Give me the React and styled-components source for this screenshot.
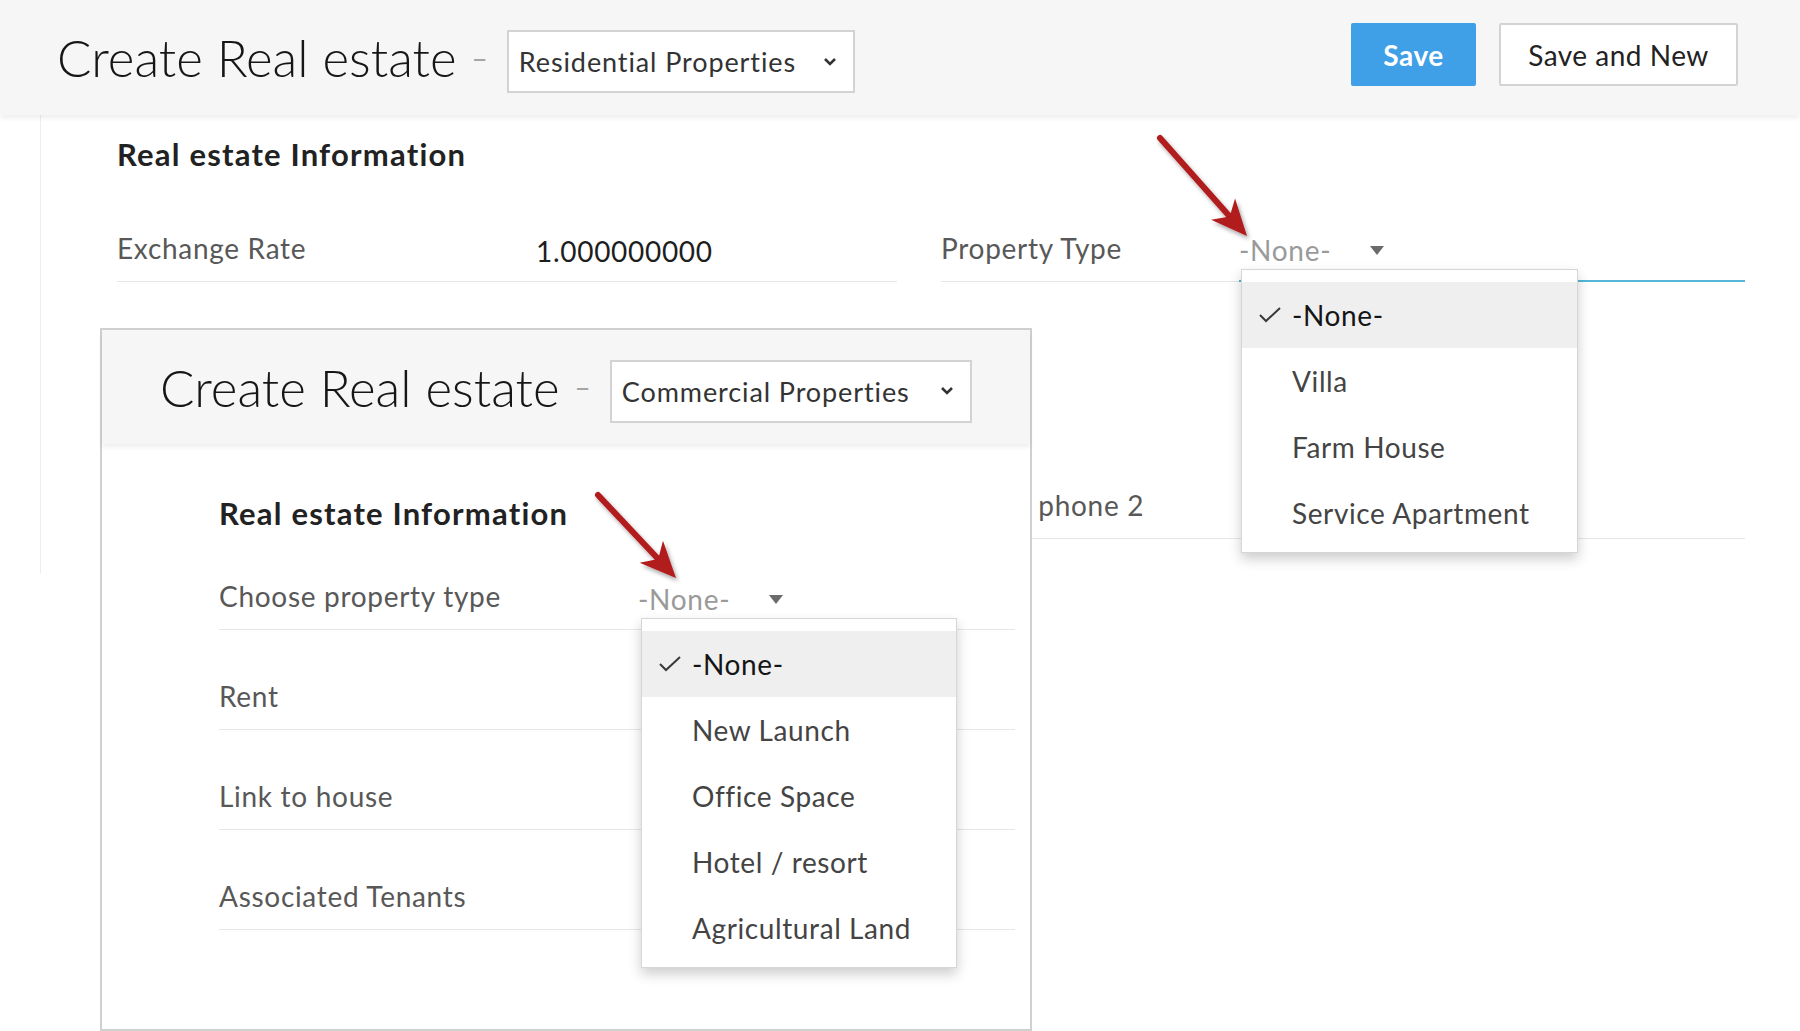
import React from 'react';
import styled, { createGlobalStyle, css } from 'styled-components';

const GlobalStyle = createGlobalStyle`
  html, body {
    margin: 0;
    padding: 0;
    background: #fff;
  }
  body {
    font-family: Lato, "Open Sans", "Liberation Sans", sans-serif;
    color: #333;
  }
`;

const Page = styled.div`
  position: relative;
  width: 1800px;
  height: 1031px;
  overflow: hidden;
  background: #fff;
`;

// header bar with title, layout picker and the buttons
const TopBar = styled.header`
  position: relative;
  z-index: 1;
  display: flex;
  align-items: center;
  box-sizing: border-box;
  height: ${p => p.$h}px;
  padding: 0 ${p => p.$right}px 0 ${p => p.$left}px;
  background: #f6f6f6;
  box-shadow: 0 3px 5px rgba(0, 0, 0, 0.07);
`;

const Title = styled.h1`
  margin: 0;
  font-size: 51px;
  font-weight: 300;
  color: #161616;
  white-space: nowrap;
`;

const Dash = styled.span`
  margin: 0 19px 0 15px;
  font-size: 28px;
  color: #a5a5a5;
`;

const LayoutSelect = styled.div`
  display: flex;
  flex-shrink: 0;
  align-items: center;
  justify-content: space-between;
  box-sizing: border-box;
  width: ${p => p.$w}px;
  height: 63px;
  margin-top: 8px;
  padding: 0 16px 0 10px;
  border: 2px solid #d3d3d3;
  background: #fff;
  font-size: 27px;
  letter-spacing: 0.9px;
  color: #333;
  white-space: nowrap;
`;

const Actions = styled.div`
  display: flex;
  gap: 23px;
  margin-left: auto;
  margin-bottom: 6px;
`;

const Button = styled.button`
  box-sizing: border-box;
  width: ${p => p.$w}px;
  height: 63px;
  border-radius: 2px;
  font-family: inherit;
  font-size: 28px;
  letter-spacing: 0.5px;
  cursor: pointer;
  ${p => p.$primary ? css`
    border: none;
    background: #3fa0e8;
    color: #fff;
    font-weight: 700;
  ` : css`
    border: 2px solid #d3d3d3;
    background: #fff;
    color: #222;
  `}
`;

const Body = styled.div`
  box-sizing: border-box;
  height: 459px;
  margin-left: 40px;
  padding: 19px 55px 0 76px;
  border-left: 1px solid #eeeeee;
`;

const SectionTitle = styled.h2`
  margin: 0;
  font-size: 31px;
  font-weight: 700;
  letter-spacing: 1.2px;
  line-height: ${p => p.$lh}px;
  color: #222;
`;

const FieldGrid = styled.div`
  display: grid;
  grid-template-columns: 780px 804px;
  column-gap: 44px;
  row-gap: 189px;
  margin-top: 40px;
`;

const FieldRow = styled.div`
  display: grid;
  grid-template-columns: ${p => p.$labelW}px 1fr;
  height: ${p => p.$h}px;
`;

const Cell = styled.div`
  position: relative;
  display: flex;
  align-items: flex-end;
  box-sizing: border-box;
  padding-bottom: 16px;
  line-height: 34px;
  font-size: 28px;
  letter-spacing: 0.7px;
  white-space: nowrap;
  border-bottom: ${p => p.$focus ? '2px solid #56b6da' : '1px solid #e7e7e7'};
`;

const Label = styled(Cell)`
  color: #585858;
`;

const Value = styled(Cell)`
  padding-bottom: 13px;
  color: #1e1e1e;
`;

const Picker = styled.div`
  display: flex;
  align-items: center;
  justify-content: space-between;
  width: 145px;
  color: #9a9a9a;
`;

const Caret = styled.span`
  width: 0;
  height: 0;
  border-left: 7px solid transparent;
  border-right: 7px solid transparent;
  border-top: 9px solid #6b6b6b;
`;

const Menu = styled.ul`
  position: absolute;
  z-index: 3;
  left: ${p => p.$left}px;
  top: calc(100% - 11px);
  width: ${p => p.$w}px;
  margin: 0;
  padding: 12px 0 6px;
  list-style: none;
  background: #fff;
  border: 1px solid #d6d6d6;
  box-shadow: 0 6px 12px rgba(0, 0, 0, 0.2);
  letter-spacing: 0.6px;
`;

const MenuItem = styled.li`
  display: flex;
  align-items: center;
  height: 66px;
  padding-left: 17px;
  font-size: 28px;
  color: ${p => p.$selected ? '#151515' : '#444'};
  background: ${p => p.$selected ? '#efefef' : 'transparent'};
`;

const Tick = styled.span`
  display: inline-flex;
  width: 33px;
`;

const Card = styled.section`
  position: absolute;
  z-index: 2;
  left: 100px;
  top: 328px;
  box-sizing: border-box;
  width: 932px;
  height: 703px;
  border: 2px solid #d0d0d0;
  background: #fff;
`;

const CardBody = styled.div`
  padding: 52px 15px 0 117px;
`;

const Arrows = styled.svg`
  position: absolute;
  z-index: 5;
  left: 0;
  top: 0;
  pointer-events: none;
`;

function Chevron() {
  return (
    <svg width="14" height="10" viewBox="0 0 14 10">
      <polyline points="2,2 7,7 12,2" fill="none" stroke="#333" strokeWidth="2.6" />
    </svg>
  );
}

function Check() {
  return (
    <svg width="22" height="16" viewBox="0 0 22 16">
      <polyline points="1,8 7,14 21,1" fill="none" stroke="#3a3a3a" strokeWidth="2" />
    </svg>
  );
}

function Dropdown({ items, left, w }) {
  return (
    <Menu $left={left} $w={w}>
      {items.map((it, i) => (
        <MenuItem key={it} $selected={i === 0}>
          <Tick>{i === 0 && <Check />}</Tick>
          {it}
        </MenuItem>
      ))}
    </Menu>
  );
}

function NonePicker() {
  return (
    <Picker>
      -None-
      <Caret />
    </Picker>
  );
}

// arrow head from tail/tip points
function arrowShape(x1, y1, x2, y2) {
  const dx = x2 - x1, dy = y2 - y1;
  const len = Math.hypot(dx, dy);
  const ux = dx / len, uy = dy / len;
  const px = -uy, py = ux;
  const bx = x2 - ux * 36, by = y2 - uy * 36;
  const nx = x2 - ux * 26, ny = y2 - uy * 26;
  const w = 16;
  return {
    line: `M${x1} ${y1} L${nx} ${ny}`,
    head: `${x2},${y2} ${bx + px * w},${by + py * w} ${nx},${ny} ${bx - px * w},${by - py * w}`,
  };
}

const arrows = [
  arrowShape(1160, 138, 1247, 236),
  arrowShape(598, 495, 676, 578),
];

const residential = ['-None-', 'Villa', 'Farm House', 'Service Apartment'];
const commercial = ['-None-', 'New Launch', 'Office Space', 'Hotel / resort', 'Agricultural Land'];
const cardFields = ['Rent', 'Link to house', 'Associated Tenants'];

export default function App() {
  return (
    <Page>
      <GlobalStyle />
      <TopBar $h={115} $left={57} $right={62}>
        <Title>Create Real estate</Title>
        <Dash>–</Dash>
        <LayoutSelect $w={348}>
          Residential Properties
          <Chevron />
        </LayoutSelect>
        <Actions>
          <Button $primary $w={125}>Save</Button>
          <Button $w={239}>Save and New</Button>
        </Actions>
      </TopBar>

      <Body>
        <SectionTitle $lh={40}>Real estate Information</SectionTitle>
        <FieldGrid>
          <FieldRow $labelW={419} $h={68}>
            <Label>Exchange Rate</Label>
            <Value>1.000000000</Value>
          </FieldRow>
          <FieldRow $labelW={298} $h={68}>
            <Label>Property Type</Label>
            <Value $focus>
              <NonePicker />
              <Dropdown items={residential} left={2} w={335} />
            </Value>
          </FieldRow>
          <FieldRow $labelW={419} $h={68}>
            <Label>Phone</Label>
            <Value />
          </FieldRow>
          <FieldRow $labelW={298} $h={68}>
            <Label>Mobile phone 2</Label>
            <Value />
          </FieldRow>
        </FieldGrid>
      </Body>

      <Card>
        <TopBar $h={114} $left={58} $right={0}>
          <Title>Create Real estate</Title>
          <Dash>–</Dash>
          <LayoutSelect $w={362}>
            Commercial Properties
            <Chevron />
          </LayoutSelect>
        </TopBar>
        <CardBody>
          <SectionTitle $lh={34}>Real estate Information</SectionTitle>
          <FieldRow $labelW={419} $h={100}>
            <Label>Choose property type</Label>
            <Value>
              <NonePicker />
              <Dropdown items={commercial} left={3} w={314} />
            </Value>
          </FieldRow>
          {cardFields.map(f => (
            <FieldRow key={f} $labelW={419} $h={100}>
              <Label>{f}</Label>
              <Value />
            </FieldRow>
          ))}
        </CardBody>
      </Card>

      <Arrows width="1800" height="1031" viewBox="0 0 1800 1031">
        <defs>
          <filter id="shade" x="-20%" y="-20%" width="140%" height="140%">
            <feDropShadow dx="2" dy="3" stdDeviation="2" floodColor="#000" floodOpacity="0.35" />
          </filter>
        </defs>
        {arrows.map((a, i) => (
          <g key={i} filter="url(#shade)">
            <path d={a.line} stroke="#b11a1d" strokeWidth="6" strokeLinecap="round" fill="none" />
            <polygon points={a.head} fill="#b11a1d" />
          </g>
        ))}
      </Arrows>
    </Page>
  );
}
